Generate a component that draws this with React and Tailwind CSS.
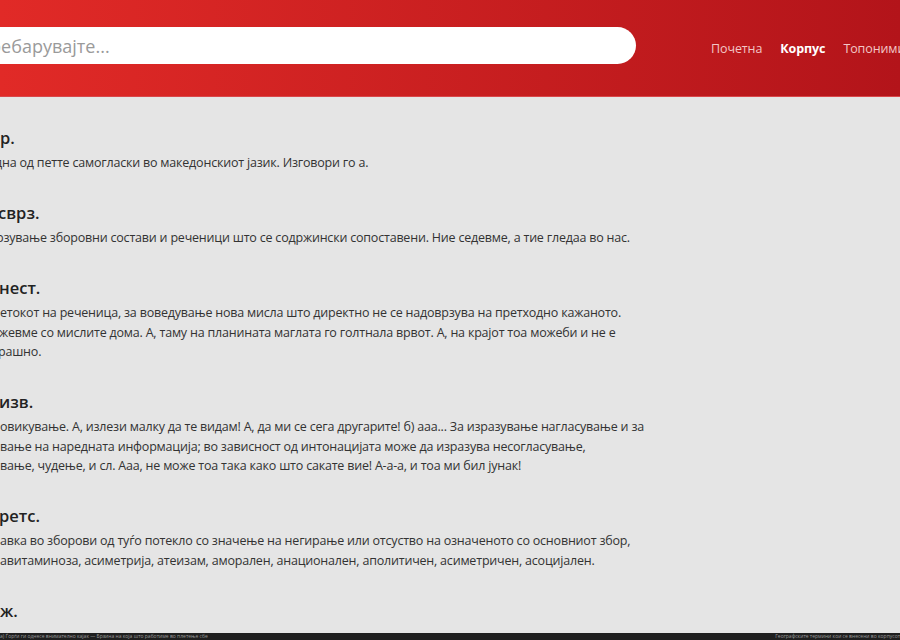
import { useState } from "react";

const entries = [
  {
    head: "р.",
    headShift: "ml-0",
    lines: [["дна од петте самогласки во македонскиот јазик. Изговори го а.", "-ml-[5px]"]],
  },
  {
    head: "сврз.",
    headShift: "-ml-[2px]",
    lines: [
      [
        "рзување зборовни состави и реченици што се содржински сопоставени. Ние седевме, а тие гледаа во нас.",
        "-ml-[4px]",
      ],
    ],
  },
  {
    head: "нест.",
    headShift: "-ml-[1px]",
    lines: [
      ["етокот на реченица, за воведување нова мисла што директно не се надоврзува на претходно кажаното.", "ml-0"],
      ["жевме со мислите дома. А, таму на планината маглата го голтнала врвот. А, на крајот тоа можеби и не е", "-ml-[1px]"],
      ["рашно.", "-ml-[2px]"],
    ],
  },
  {
    head: "изв.",
    headShift: "-ml-[1px]",
    lines: [
      [
        "овикување. А, излези малку да те видам! А, да ми се сега другарите! б) ааа... За изразување нагласување и за",
        "ml-0",
      ],
      ["вање на наредната информација; во зависност од интонацијата може да изразува несогласување,", "ml-0"],
      ["вање, чудење, и сл. Ааа, не може тоа така како што сакате вие! А-а-а, и тоа ми бил јунак!", "ml-0"],
    ],
  },
  {
    head: "ретс.",
    headShift: "-ml-[1px]",
    lines: [
      ["авка во зборови од туѓо потекло со значење на негирање или отсуство на означеното со основниот збор,", "ml-0"],
      ["авитаминоза, асиметрија, атеизам, аморален, анационален, аполитичен, асиметричен, асоцијален.", "ml-0"],
    ],
  },
  { head: "ж.", headShift: "ml-0", lines: [] },
];

function Entry({ entry }) {
  return (
    <div className="mb-[25.5px]">
      <h2 className={`${entry.headShift} text-[16.5px] leading-[30px] font-semibold text-[#222]`}>{entry.head}</h2>
      {entry.lines.map(([text, shift], i) => (
        <p key={i} className={`${shift} whitespace-nowrap text-[12.5px] tracking-[-0.2px] leading-[19.5px] text-[#333]`}>
          {text}
        </p>
      ))}
    </div>
  );
}

export default function App() {
  const [query, setQuery] = useState("");

  return (
    <div
      className="h-[640px] w-[900px] overflow-hidden flex flex-col bg-[#e5e5e5]"
      style={{ fontFamily: '"Open Sans", "Noto Sans", sans-serif' }}
    >
      <header className="h-[97px] shrink-0 flex items-center bg-gradient-to-r from-[#e12a27] to-[#b3141a] border-b border-[#d9474a]">
        <div className="-ml-[40px] w-[676px] shrink-0 mb-[5px]">
          <input
            value={query}
            onChange={(e) => setQuery(e.target.value)}
            placeholder="Пребарувајте..."
            className="w-full h-[37px] rounded-full bg-white pl-[17px] pr-4 text-[18px] text-[#333] placeholder:text-[#9a9a9a] outline-none"
          />
        </div>
        <nav className="ml-[75px] flex items-center gap-[18px] whitespace-nowrap text-[12.5px] tracking-[-0.1px] mt-[2px]">
          <a className="text-[#f2c6c6]">Почетна</a>
          <a className="text-white font-bold">Корпус</a>
          <a className="text-[#f2c6c6]">Топоними</a>
        </nav>
      </header>

      <main className="flex-1 overflow-hidden pt-[26px]">
        {entries.map((entry, i) => (
          <Entry key={i} entry={entry} />
        ))}
      </main>

      <footer className="h-[7px] shrink-0 bg-[#1f1f1f] flex items-center justify-between overflow-hidden text-[5px] leading-none text-[#9a9a9a] whitespace-nowrap">
        <span>а) Ѓорѓи ги однесе внимателно кајак — Брзина на која што работиме во плетење сбе</span>
        <span>Географските термини кои се внесени во корпусот</span>
      </footer>
    </div>
  );
}
